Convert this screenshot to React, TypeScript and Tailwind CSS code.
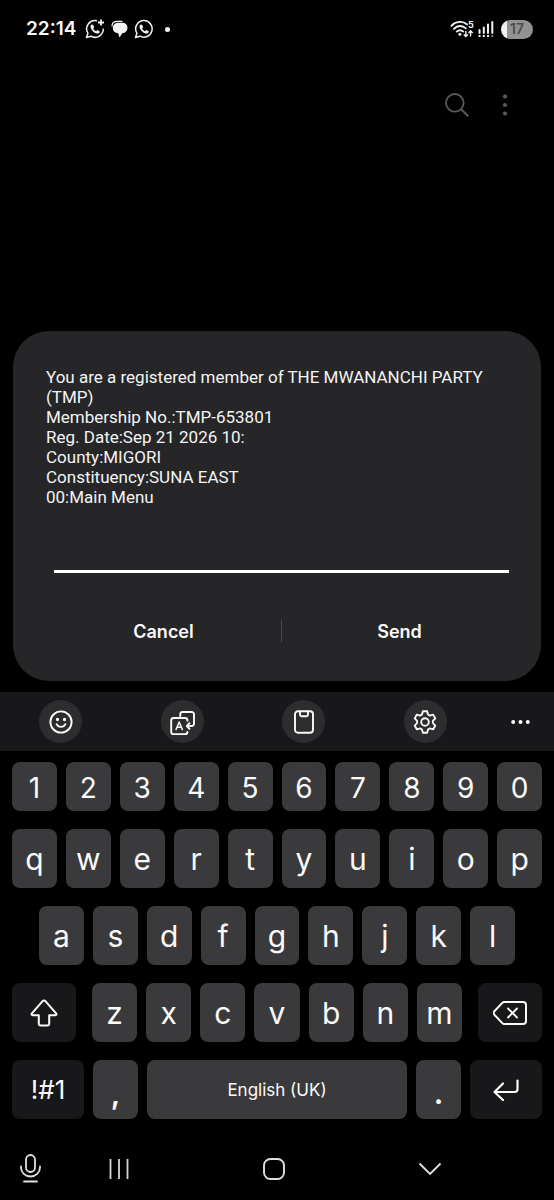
import type { ReactNode } from "react";

const numbers = ["1", "2", "3", "4", "5", "6", "7", "8", "9", "0"];
const topLetters = ["q", "w", "e", "r", "t", "y", "u", "i", "o", "p"];
const homeLetters = ["a", "s", "d", "f", "g", "h", "j", "k", "l"];
const bottomLetters = ["z", "x", "c", "v", "b", "n", "m"];

const message = [
  "You are a registered member of THE MWANANCHI PARTY (TMP)",
  "Membership No.:TMP-653801",
  "Reg. Date:Sep 21 2026 10:",
  "County:MIGORI",
  "Constituency:SUNA EAST",
  "00:Main Menu",
];

function WhatsAppIcon({ plus = false }: { plus?: boolean }) {
  return (
    <svg width="20" height="20" viewBox="0 0 20 20" fill="none" aria-hidden="true">
      <path
        d={
          plus
            ? "M12 1.8A8.3 8.3 0 0 0 2.9 14.2L1.5 18.5l4.4-1.3A8.3 8.3 0 0 0 18.3 9.6"
            : "M10.2 1.6a8.3 8.3 0 0 0-7.3 12.6L1.5 18.5l4.4-1.3A8.3 8.3 0 1 0 10.2 1.6z"
        }
        stroke="#f2f2f2"
        strokeWidth="1.5"
        strokeLinejoin="round"
      />
      <path
        d="M6.7 5.6c-.9.5-1.4 1.6-1.1 2.9.9 3 3.2 5.2 6.1 6 1.3.3 2.5-.2 2.9-1.3v-1l-2.3-1.1-1.2 1.1c-1.2-.5-2.2-1.5-2.9-2.8l1-1.1-1.2-2.6z"
        fill="#f2f2f2"
      />
      {plus && <path d="M16 .5v6M13 3.5h6" stroke="#f2f2f2" strokeWidth="1.8" />}
    </svg>
  );
}

function MessagesIcon() {
  return (
    <svg width="17" height="18" viewBox="0 0 17 18" fill="none" aria-hidden="true">
      <path d="M1 6C1 3 3 1.3 6 1.3h5" stroke="#f2f2f2" strokeWidth="1.2" strokeLinecap="round" />
      <path
        d="M7.2 2.800h4c3.200 0 5.300 2 5.300 5s-2.200 5.200-5.200 5.400L8.500 17.400 7.200 13.200C4 13.200 1.800 11 1.800 8s2.200-5.200 5.400-5.200z"
        fill="#f2f2f2"
      />
    </svg>
  );
}

function WifiIcon() {
  return (
    <svg width="24" height="18" viewBox="0 0 24 18" fill="none" aria-hidden="true">
      <g stroke="#f2f2f2" strokeWidth="1.9" strokeLinecap="round">
        <path d="M1.400 5.800C5.600 1 13 .6 17 4.400" />
        <path d="M4 8.800c3.200-3.600 8.600-3.600 11.800-.4" />
        <path d="M6.800 11.600c1.800-1.900 4.600-1.900 6.400 0" />
      </g>
      <circle cx="9.900" cy="14.200" r="1.500" fill="#f2f2f2" />
      <path
        d="M15.800 11v5.400M13.700 14.500l2.100 2.100 2.100-2.100M20.600 16.600V11M18.500 12.900l2.100-2.100 2.100 2.100"
        stroke="#f2f2f2"
        strokeWidth="1.400"
      />
      <text x="18" y="8" fontSize="9" fontWeight="700" fill="#f2f2f2" fontFamily="Inter, sans-serif">
        5
      </text>
    </svg>
  );
}

function SignalIcon() {
  return (
    <svg width="16" height="18" viewBox="0 0 16 18" fill="none" aria-hidden="true">
      <g stroke="#f2f2f2" strokeWidth="2">
        <path d="M1.500 10v3M5.800 7.500v5.500M10 4.500v8.500M14.300 2v11" strokeLinecap="round" />
        <path d="M1.500 15v2M5.800 15v2M10 15v2" />
      </g>
      <path d="M14.300 15v2" stroke="#777" strokeWidth="2" />
    </svg>
  );
}

function StatusBar() {
  return (
    <header className="flex items-center justify-between pt-[17px] pr-[21px] pl-[26px]">
      <div className="flex h-6 items-center">
        <time className="text-[19px] font-semibold">22:14</time>
        <div className="ml-[9px] flex items-center gap-[6px]">
          <WhatsAppIcon plus />
          <MessagesIcon />
          <WhatsAppIcon />
        </div>
        <span className="ml-[11px] h-[5px] w-[5px] rounded-full bg-[#f2f2f2]" />
      </div>
      <div className="flex items-center gap-1">
        <WifiIcon />
        <SignalIcon />
        <span className="ml-[3px] flex h-[19px] w-8 items-center justify-center rounded-full bg-linear-to-r from-[#f2f2f2] from-18% to-[#929292] to-18% text-sm font-semibold text-[#4c4c4c]">
          17
        </span>
      </div>
    </header>
  );
}

function AppBar() {
  return (
    <div className="flex items-center justify-end gap-6 pt-[52px] pr-[37px]">
      <button type="button" aria-label="Search">
        <svg width="24" height="24" viewBox="0 0 24 24" fill="none" stroke="#5a5a5a" strokeWidth="1.800">
          <circle cx="9.800" cy="9.800" r="8.800" />
          <path d="M16.200 16.200l7 7" strokeWidth="2" />
        </svg>
      </button>
      <button type="button" aria-label="More options">
        <svg width="24" height="24" viewBox="0 0 24 24" fill="#5a5a5a">
          <circle cx="12" cy="3.500" r="2.100" />
          <circle cx="12" cy="12" r="2.100" />
          <circle cx="12" cy="20.500" r="2.100" />
        </svg>
      </button>
    </div>
  );
}

function UssdDialog() {
  return (
    <section
      role="dialog"
      aria-label="USSD message"
      className="mx-[13px] rounded-[36px] bg-[#262628] pt-9 pr-6 pb-8 pl-[33px]"
    >
      <div className="font-[Roboto,sans-serif] text-[17px] leading-[20px] text-[#f4f4f4]">
        {message.map((line) => (
          <p key={line}>{line}</p>
        ))}
      </div>

      <div className="px-2">
        <input
          type="text"
          aria-label="Reply"
          className="mt-6 block h-[42px] w-full border-b-3 border-white bg-transparent text-lg outline-none"
        />
      </div>

      <div className="mt-10 flex items-center text-[18px] font-semibold">
        <button type="button" className="h-9 flex-1">
          Cancel
        </button>
        <span className="h-[22px] w-px bg-[#4a4a4c]" />
        <button type="button" className="h-9 flex-1">
          Send
        </button>
      </div>
    </section>
  );
}

function ToolButton({ label, children }: { label: string; children: ReactNode }) {
  return (
    <button
      type="button"
      aria-label={label}
      className="flex h-[43px] w-[43px] items-center justify-center rounded-full bg-[#2d2d2f]"
    >
      <svg
        width="26"
        height="26"
        viewBox="0 0 26 26"
        fill="none"
        stroke="#fafafa"
        strokeWidth="1.900"
        strokeLinecap="round"
        strokeLinejoin="round"
      >
        {children}
      </svg>
    </button>
  );
}

function Toolbar() {
  return (
    <div className="flex h-[59px] items-center bg-[#18181a] pr-6 pl-[39px]">
      <div className="flex flex-1 justify-between">
        <ToolButton label="Emoji">
          <circle cx="13" cy="13" r="10.600" />
          <path d="M8.600 15.200c1.800 3.600 7 3.600 8.800 0" />
          <circle cx="9.500" cy="10.500" r=".7" fill="#fafafa" />
          <circle cx="16.500" cy="10.500" r=".7" fill="#fafafa" />
        </ToolButton>
        <ToolButton label="Translate">
          <path d="M11.300 7.200V5.300a2.300 2.300 0 0 1 2.300-2.300h9.100a2.300 2.300 0 0 1 2.300 2.300V14.700a2.300 2.300 0 0 1-2.300 2.300H18.500" />
          <path d="M20.500 14.200L17.800 17l2.700 2.800" />
          <path d="M18.500 11.800v-.3a2.500 2.500 0 0 0-2.500-2.500H4.700a2.500 2.500 0 0 0-2.500 2.500v11.300a2.500 2.500 0 0 0 2.500 2.500H16a2.500 2.500 0 0 0 2.500-2.400" />
          <path d="M7 20.600l3.200-7.600 3.200 7.600M8.100 18.300h4.200" strokeWidth="1.500" />
        </ToolButton>
        <ToolButton label="Clipboard">
          <rect x="4" y="2.300" width="18" height="21.400" rx="3" />
          <path d="M9 2.500v3.300a1.500 1.500 0 0 0 1.500 1.500h5a1.500 1.500 0 0 0 1.500-1.500V2.500" />
        </ToolButton>
        <ToolButton label="Keyboard settings">
          <circle cx="13" cy="13" r="3.800" />
          <path d="M10.900 2.200h4.200l.9 3.300 1.900 1.100 3.300-.9 2.100 3.700-2.400 2.400v2.400l2.400 2.400-2.100 3.700-3.300-.9-1.900 1.100-.9 3.300h-4.200l-.9-3.300-1.900-1.100-3.300.9-2.100-3.700 2.400-2.400v-2.400L2.700 9.400l2.100-3.700 3.300.9L10 5.500z" />
        </ToolButton>
      </div>
      <button type="button" aria-label="More tools" className="ml-16">
        <svg width="19" height="6" viewBox="0 0 19 6" fill="#fafafa">
          <circle cx="2.200" cy="3" r="2" />
          <circle cx="9.500" cy="3" r="2" />
          <circle cx="16.800" cy="3" r="2" />
        </svg>
      </button>
    </div>
  );
}

function Key({ label }: { label: string }) {
  return (
    <button type="button" className="h-[59px] min-w-0 flex-1 rounded-lg bg-[#3a3a3c] pt-px text-[30px]">
      {label}
    </button>
  );
}

function Keyboard() {
  return (
    <div className="flex flex-col gap-[18px] px-3 pt-[11px]">
      <div className="flex gap-[9px]">
        {numbers.map((n) => (
          <button key={n} type="button" className="h-[49px] min-w-0 flex-1 rounded-lg bg-[#3a3a3c] pt-[2px] text-[28px]">
            {n}
          </button>
        ))}
      </div>

      <div className="flex gap-[9px]">
        {topLetters.map((l) => (
          <Key key={l} label={l} />
        ))}
      </div>

      <div className="flex gap-[9px] px-[27px]">
        {homeLetters.map((l) => (
          <Key key={l} label={l} />
        ))}
      </div>

      <div className="flex gap-4">
        <button
          type="button"
          aria-label="Shift"
          className="flex h-[59px] flex-[64] items-center justify-center rounded-lg bg-[#18181a]"
        >
          <svg width="28" height="28" viewBox="0 0 28 28" fill="none" stroke="#fafafa" strokeWidth="2" strokeLinejoin="round">
            <path d="M12.600 2.100L1.900 14.300c-.8 1-.3 1.900.8 1.900h6.100v8.300a2 2 0 0 0 2 2h6.400a2 2 0 0 0 2-2v-8.300h6.100c1.100 0 1.600-.9.800-1.900L15.400 2.100a1.900 1.900 0 0 0-2.800 0z" />
          </svg>
        </button>
        <div className="flex flex-[370] gap-[9px]">
          {bottomLetters.map((l) => (
            <Key key={l} label={l} />
          ))}
        </div>
        <button
          type="button"
          aria-label="Backspace"
          className="flex h-[59px] flex-[64] items-center justify-center rounded-lg bg-[#18181a]"
        >
          <svg width="34" height="24" viewBox="0 0 34 24" fill="none" stroke="#fafafa" strokeWidth="2" strokeLinejoin="round">
            <path d="M11.500 1H30a3 3 0 0 1 3 3v16a3 3 0 0 1-3 3H11.500a3 3 0 0 1-2.200-.9L1.600 14a3 3 0 0 1 0-4l7.700-8.100a3 3 0 0 1 2.200-.9z" />
            <path d="M15 7.500l9 9M24 7.500l-9 9" strokeLinecap="round" strokeWidth="1.800" />
          </svg>
        </button>
      </div>

      <div className="flex gap-[9px]">
        <button type="button" className="h-[59px] min-w-0 flex-[72] rounded-lg bg-[#18181a] text-[26px]">
          !#1
        </button>
        <button type="button" className="h-[59px] min-w-0 flex-[45] rounded-lg bg-[#3a3a3c] pt-2 text-[30px] font-semibold">
          ,
        </button>
        <button type="button" className="h-[59px] min-w-0 flex-[260] rounded-lg bg-[#3a3a3c] pt-[2px] text-[17px]">
          English (UK)
        </button>
        <button type="button" className="h-[59px] min-w-0 flex-[45] rounded-lg bg-[#3a3a3c] pt-2 text-[30px] font-semibold">
          .
        </button>
        <button
          type="button"
          aria-label="Enter"
          className="flex h-[59px] min-w-0 flex-[72] items-center justify-center rounded-lg bg-[#18181a]"
        >
          <svg
            width="26"
            height="22"
            viewBox="0 0 26 22"
            fill="none"
            stroke="#fafafa"
            strokeWidth="2.200"
            strokeLinecap="round"
            strokeLinejoin="round"
          >
            <path d="M24.500 1.500V10a3 3 0 0 1-3 3h-20M10 4.500l-8.500 8.500 8.500 8" />
          </svg>
        </button>
      </div>
    </div>
  );
}

function NavBar() {
  return (
    <nav className="flex items-center pt-[35px] pr-[112px] pb-[17px] pl-5">
      <button type="button" aria-label="Voice input">
        <svg width="21" height="29" viewBox="0 0 21 29" fill="none" stroke="#e0e0e0" strokeWidth="1.800" strokeLinecap="round">
          <rect x="6" y="1" width="9" height="17" rx="4.500" />
          <path d="M1 12.500v1a9.500 9 0 0 0 19 0v-1M4 27.500h13" />
        </svg>
      </button>
      <div className="ml-[68px] flex flex-1 items-center justify-between">
        <button type="button" aria-label="Recent apps">
          <svg width="20" height="22" viewBox="0 0 20 22" fill="none" stroke="#d6d6d6" strokeWidth="1.800">
            <path d="M1.500 1v20M10 1v20M18.500 1v20" />
          </svg>
        </button>
        <button type="button" aria-label="Home">
          <svg width="22" height="22" viewBox="0 0 22 22" fill="none" stroke="#e0e0e0" strokeWidth="1.900">
            <rect x="1" y="1" width="20" height="20" rx="6.500" />
          </svg>
        </button>
        <button type="button" aria-label="Hide keyboard">
          <svg width="24" height="14" viewBox="0 0 24 14" fill="none" stroke="#e0e0e0" strokeWidth="1.900">
            <path d="M1.500 1.500L12 12 22.500 1.500" />
          </svg>
        </button>
      </div>
    </nav>
  );
}

export default function App() {
  return (
    <main className="flex min-h-screen flex-col bg-black font-[Inter,sans-serif] text-[#fafafa]">
      <StatusBar />
      <AppBar />
      <div className="mt-auto">
        <UssdDialog />
        <div className="mt-[11px]">
          <Toolbar />
          <Keyboard />
          <NavBar />
        </div>
      </div>
    </main>
  );
}
